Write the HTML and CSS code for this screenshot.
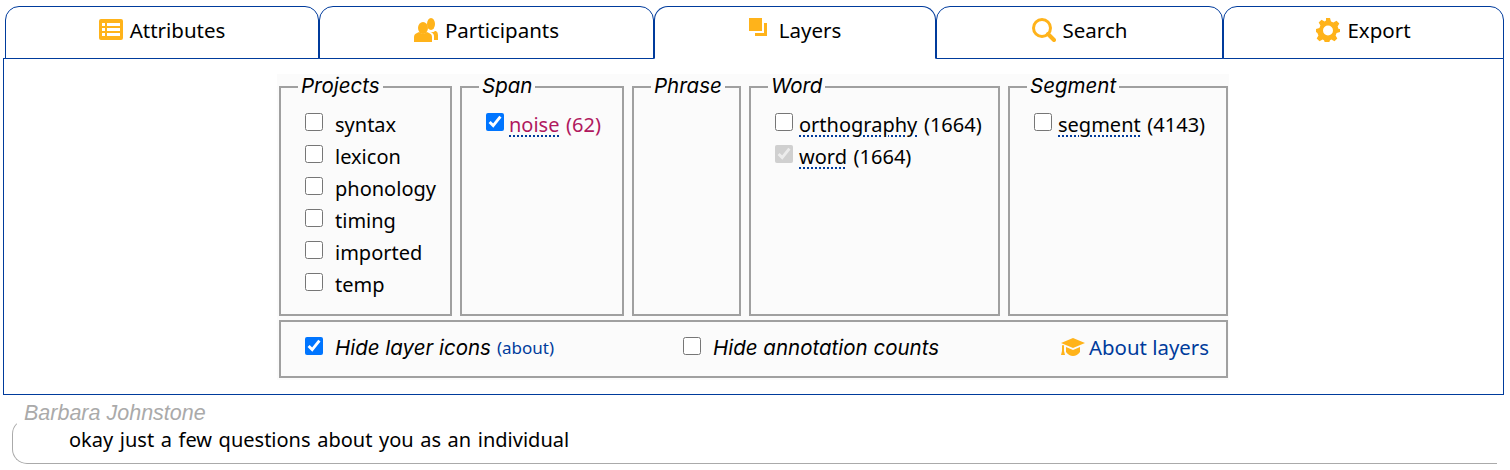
FILE: index.html
```html
<!DOCTYPE html>
<html lang="en">
<head>
<meta charset="utf-8">
<title>Layers</title>
<link rel="stylesheet" href="styles.css">
</head>
<body>
<nav class="tabs">
  <a class="tab tab-attributes"><svg class="icon" viewBox="0 0 24 21"><path fill="#ffb31a" fill-rule="evenodd" d="M2 0h20a2 2 0 0 1 2 2v17a2 2 0 0 1-2 2H2a2 2 0 0 1-2-2V2a2 2 0 0 1 2-2zM3 4v3h3V4zM8 4v3h13V4zM3 9v3h3V9zM8 9v3h13V9zM3 14v3h3v-3zM8 14v3h13v-3z"/></svg>Attributes</a>
  <a class="tab tab-participants"><svg class="icon icon-tall" viewBox="0 0 24 24"><g fill="#ffb31a"><ellipse cx="9" cy="10" rx="5" ry="6"/><ellipse cx="17" cy="6" rx="4" ry="6"/><path d="M0 24v-5q0-3 3-4l2-1q4 3 8 0l2 1q3 1 3 4v5z"/><path d="M16 14q3 1 5-1l1 0q2 1 2 4v5h-4v-4q0-3-4-4z"/></g></svg>Participants</a>
  <a class="tab tab-layers active"><svg class="icon icon-layers" viewBox="0 0 18 18"><path fill="#ffb31a" d="M0 0h13v13H0zM15 5h3v13H6v-3h9z"/></svg>Layers</a>
  <a class="tab tab-search"><svg class="icon icon-tall" viewBox="0 0 24 24"><circle cx="10" cy="10" r="8.500" fill="none" stroke="#ffb31a" stroke-width="3"/><path d="M16 16l6 6" stroke="#ffb31a" stroke-width="4" stroke-linecap="round"/></svg>Search</a>
  <a class="tab tab-export"><svg class="icon icon-tall" viewBox="0 0 24 24"><path fill="#ffb31a" fill-rule="evenodd" d="M10 0h4l1 3.400 2.400 1 3.100-1.700 2.800 2.800-1.700 3.100 1 2.400L24 11v3l-3.400 1-1 2.400 1.700 3.100-2.800 2.800-3.100-1.700-1.400.6-1 2.800h-4l-1-2.800-1.400-.6-3.100 1.700-2.800-2.800 1.700-3.100-1-2.400L0 14v-3l3.400-1 1-2.400-1.700-3.100 2.800-2.800 3.100 1.700 1.400-1zM12 7.500a5 5 0 1 0 0 10 5 5 0 0 0 0-10z"/></svg>Export</a>
</nav>
<main class="panel">
  <div class="picker">
    <div class="groups">
      <fieldset class="group g-projects">
        <legend>Projects</legend>
        <label class="row"><input type="checkbox"><span>syntax</span></label>
        <label class="row"><input type="checkbox"><span>lexicon</span></label>
        <label class="row"><input type="checkbox"><span>phonology</span></label>
        <label class="row"><input type="checkbox"><span>timing</span></label>
        <label class="row"><input type="checkbox"><span>imported</span></label>
        <label class="row"><input type="checkbox"><span>temp</span></label>
      </fieldset>
      <fieldset class="group g-span">
        <legend>Span</legend>
        <label class="row narrow selected"><input type="checkbox" checked><span><u>noise</u> (62)</span></label>
      </fieldset>
      <fieldset class="group g-phrase">
        <legend>Phrase</legend>
      </fieldset>
      <fieldset class="group g-word">
        <legend>Word</legend>
        <label class="row narrow"><input type="checkbox"><span><u>orthography</u> (1664)</span></label>
        <label class="row narrow"><input type="checkbox" checked disabled><span><u>word</u> (1664)</span></label>
      </fieldset>
      <fieldset class="group g-segment">
        <legend>Segment</legend>
        <label class="row narrow"><input type="checkbox"><span><u>segment</u> (4143)</span></label>
      </fieldset>
    </div>
    <div class="options">
      <label class="option opt-icons"><input type="checkbox" checked><em>Hide layer icons</em><a class="about">(about)</a></label>
      <label class="option opt-counts"><input type="checkbox"><em>Hide annotation counts</em></label>
      <a class="about-layers"><svg class="cap" viewBox="0 0 24 18"><path fill="#ffb31a" d="M12 0L24 5 12 10 0 5zM5 9l7 3 7-3v5q-3 4-7 4t-7-4zM2 7l1 .5V13l1 4H0l1-4V7.500z"/></svg>About layers</a>
    </div>
  </div>
</main>
<section class="utterance">
  <div class="bubble">okay just a few questions about you as an individual</div>
  <div class="speaker">Barbara Johnstone</div>
</section>
</body>
</html>
```

FILE: styles.css
```css
* { box-sizing: border-box; }
html, body { margin: 0; padding: 0; background: #fff; }
body { font-family: "Noto Sans", sans-serif; font-size: 20px; word-spacing: 1.4px; color: #000; height: 470px; overflow: hidden; padding: 6px 0 0 3px; }

.tabs { display: flex; padding-left: 2px; height: 53px; position: relative; z-index: 1; }
.tab { display: flex; align-items: center; justify-content: center; height: 53px; padding-bottom: 6px; border: 1px solid #003b9c; border-radius: 14px 14px 0 0; background: #fff; font-size: 20.5px; }
.tab-attributes { width: 314px; }
.tab-participants { width: 335px; }
.tab-layers { width: 282px; }
.tab-search { width: 287px; }
.tab-export { width: 281px; }
.tab.active { border-bottom-color: #fff; }
.icon { width: 24px; height: 21px; margin-right: 7px; }
.icon-tall { height: 24px; width: 24px; }
.icon-layers { width: 18px; height: 18px; margin: -5px 12px 0 0; }

.panel { width: 1501px; height: 337px; margin-top: -1px; border: 1px solid #003b9c; display: flex; justify-content: center; padding-top: 15px; padding-right: 1px; }
.picker { width: 952px; height: 306px; background: #fbfbfb; padding: 0 1px 0 2px; }
.groups { display: flex; gap: 8px; height: 246px; }
.group { margin: 0; padding: 9px 0 0 24px; border: 2px solid #a0a0a0; height: 242px; min-width: 0; }
.group legend { font-family: Inter, sans-serif; font-size: 20.5px; font-style: italic; padding: 0 3px 2px; margin-left: -7px; line-height: 24px; word-spacing: 0; }
.g-projects { width: 173px; }
.g-span { width: 164px; }
.g-phrase { width: 109px; }
.g-word { width: 251px; }
.g-segment { width: 220px; }
.row { display: flex; align-items: flex-start; height: 32px; line-height: 32px; }
.row input { width: 18px; height: 18px; margin: 4px 12px 0 0; flex: none; }
.row.narrow input { margin-right: 6px; }
.row.selected input { margin-right: 5px; }
u { text-decoration: underline dotted #003b9c 2px; text-underline-offset: 3px; }
.selected span { color: #b0185e; }

.options { display: flex; align-items: center; height: 58px; border: 2px solid #a0a0a0; padding: 0 17px 4px 24px; }
.option { display: flex; align-items: center; white-space: pre; }
.option em { font-family: Inter, sans-serif; font-size: 20.5px; word-spacing: 0; }
.option input { width: 18px; height: 18px; margin: -2px 12px 0 0; }
.opt-icons { width: 378px; }
.opt-counts { flex: 1; }
.about { font-size: 17px; color: #003b9c; margin-left: 6px; }
.about-layers { display: flex; align-items: center; color: #003b9c; font-size: 20.4px; word-spacing: 0; }
.cap { width: 24px; height: 18px; margin-right: 4px; }

.utterance { position: relative; margin: 24px 0 0 9px; }
.speaker { position: absolute; left: 12px; top: -17px; font-family: "Liberation Sans", sans-serif; font-style: italic; font-size: 21.5px; word-spacing: 0; color: #aaa; line-height: 22px; }
.bubble { height: 45px; width: 1485px; border: 1px solid #aaa; border-top-color: transparent; border-right: 0; border-radius: 15px 0 0 15px; padding: 6px 0 0 56px; line-height: 28px; }
```
